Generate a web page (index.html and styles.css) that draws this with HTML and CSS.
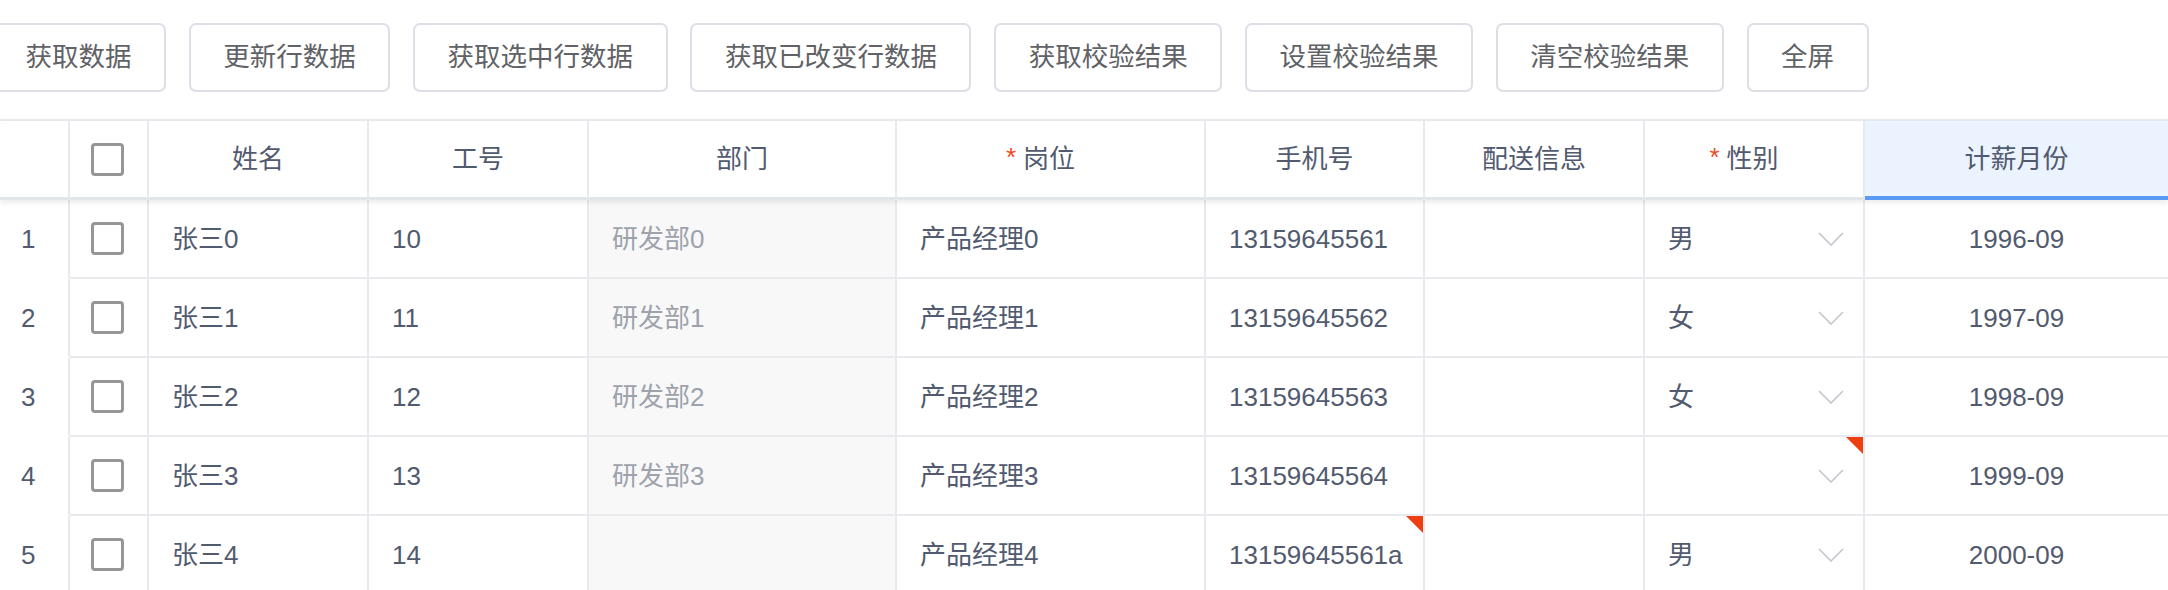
FILE: index.html
```html
<!DOCTYPE html>
<html lang="zh-CN">
<head>
<meta charset="utf-8">
<title>可编辑表格</title>
<link rel="stylesheet" href="styles.css">
</head>
<body>
<div class="page">
  <div class="toolbar">
    <button class="btn">获取数据</button>
    <button class="btn">更新行数据</button>
    <button class="btn">获取选中行数据</button>
    <button class="btn">获取已改变行数据</button>
    <button class="btn">获取校验结果</button>
    <button class="btn">设置校验结果</button>
    <button class="btn">清空校验结果</button>
    <button class="btn">全屏</button>
  </div>

  <div class="table">
    <div class="row head">
      <div class="cell seq"></div>
      <div class="cell chk"><span class="checkbox"></span></div>
      <div class="cell th">姓名</div>
      <div class="cell th">工号</div>
      <div class="cell th">部门</div>
      <div class="cell th req"><span class="star">*</span>岗位</div>
      <div class="cell th">手机号</div>
      <div class="cell th">配送信息</div>
      <div class="cell th req"><span class="star">*</span>性别</div>
      <div class="cell th active">计薪月份</div>
    </div>

    <div class="row">
      <div class="cell seq">1</div>
      <div class="cell chk"><span class="checkbox"></span></div>
      <div class="cell">张三0</div>
      <div class="cell">10</div>
      <div class="cell dept">研发部0</div>
      <div class="cell">产品经理0</div>
      <div class="cell">13159645561</div>
      <div class="cell"></div>
      <div class="cell select"><span>男</span><svg class="arrow" viewBox="0 0 26 14"><polyline points="1,1 13,13 25,1"/></svg></div>
      <div class="cell center">1996-09</div>
    </div>

    <div class="row">
      <div class="cell seq">2</div>
      <div class="cell chk"><span class="checkbox"></span></div>
      <div class="cell">张三1</div>
      <div class="cell">11</div>
      <div class="cell dept">研发部1</div>
      <div class="cell">产品经理1</div>
      <div class="cell">13159645562</div>
      <div class="cell"></div>
      <div class="cell select"><span>女</span><svg class="arrow" viewBox="0 0 26 14"><polyline points="1,1 13,13 25,1"/></svg></div>
      <div class="cell center">1997-09</div>
    </div>

    <div class="row">
      <div class="cell seq">3</div>
      <div class="cell chk"><span class="checkbox"></span></div>
      <div class="cell">张三2</div>
      <div class="cell">12</div>
      <div class="cell dept">研发部2</div>
      <div class="cell">产品经理2</div>
      <div class="cell">13159645563</div>
      <div class="cell"></div>
      <div class="cell select"><span>女</span><svg class="arrow" viewBox="0 0 26 14"><polyline points="1,1 13,13 25,1"/></svg></div>
      <div class="cell center">1998-09</div>
    </div>

    <div class="row">
      <div class="cell seq">4</div>
      <div class="cell chk"><span class="checkbox"></span></div>
      <div class="cell">张三3</div>
      <div class="cell">13</div>
      <div class="cell dept">研发部3</div>
      <div class="cell">产品经理3</div>
      <div class="cell">13159645564</div>
      <div class="cell"></div>
      <div class="cell select invalid"><span></span><svg class="arrow" viewBox="0 0 26 14"><polyline points="1,1 13,13 25,1"/></svg></div>
      <div class="cell center">1999-09</div>
    </div>

    <div class="row">
      <div class="cell seq">5</div>
      <div class="cell chk"><span class="checkbox"></span></div>
      <div class="cell">张三4</div>
      <div class="cell">14</div>
      <div class="cell dept"></div>
      <div class="cell">产品经理4</div>
      <div class="cell invalid">13159645561a</div>
      <div class="cell"></div>
      <div class="cell select"><span>男</span><svg class="arrow" viewBox="0 0 26 14"><polyline points="1,1 13,13 25,1"/></svg></div>
      <div class="cell center">2000-09</div>
    </div>
  </div>
</div>
</body>
</html>
```

FILE: styles.css
```css
* {
  box-sizing: border-box;
}

html, body {
  margin: 0;
  padding: 0;
  background: #ffffff;
  overflow: hidden;
}

body {
  font-family: "Liberation Sans", "Noto Sans CJK SC", sans-serif;
  font-size: 26px;
  color: #515a6e;
}

.page {
  width: 2168px;
}

.toolbar {
  display: flex;
  gap: 22.8px;
  padding-top: 23px;
  margin-left: -9px;
  margin-bottom: 27px;
}

.btn {
  height: 69px;
  padding: 0 32.5px;
  border: 2px solid #dcdfe6;
  border-radius: 7px;
  background: #ffffff;
  color: #606266;
  font-family: "Liberation Sans", "Noto Sans CJK SC", sans-serif;
  font-size: 26.5px;
  line-height: 1;
  white-space: nowrap;
}

.table {
  border-top: 2px solid #e6e9ee;
}

.row {
  display: grid;
  grid-template-columns: 70px 79px 220px 220px 308px 309px 219px 220px 220px 303px;
  height: 79px;
}

.row.head {
  height: 79px;
  position: relative;
  z-index: 1;
  box-shadow: 0 3px 5px rgba(0, 0, 0, 0.07);
}

.cell {
  position: relative;
  display: flex;
  align-items: center;
  padding: 0 23px;
  border-right: 2px solid #e8eaee;
  border-bottom: 2px solid #e8eaee;
  line-height: 1;
  white-space: nowrap;
  background: #ffffff;
}

.head .cell {
  border-bottom: 3px solid #e2e5ea;
}

.th {
  justify-content: center;
  padding: 0 10px;
  color: #515a6e;
}

.th.req {
  padding-right: 30px;
}

.star {
  color: #ee4a1e;
  font-size: 26px;
  margin-right: 7px;
  align-self: center;
  position: relative;
  top: -2px;
}

.th.active {
  background: #ebf3fe;
  border-bottom: 4px solid #5b9af3;
  border-right: none;
}

.cell.seq {
  padding-left: 21px;
  border-bottom-color: transparent;
}

.head .cell.seq {
  border-bottom: 3px solid #e2e5ea;
}

.cell.chk {
  justify-content: center;
  padding: 0;
}

.checkbox {
  display: block;
  width: 33px;
  height: 33px;
  border: 3px solid #969696;
  border-radius: 4px;
  background: #ffffff;
  margin-left: -2px;
}

.cell.dept {
  background: #f8f8f9;
  color: #9da2ab;
}

.cell.select {
  justify-content: space-between;
  padding-right: 19px;
}

.arrow {
  width: 26px;
  height: 14px;
  fill: none;
  stroke: #c3c6cc;
  stroke-width: 1.6;
}

.cell.center {
  justify-content: center;
  border-right: none;
}

.cell.invalid::after {
  content: "";
  position: absolute;
  top: 0;
  right: 0;
  width: 17px;
  height: 17px;
  background: #ee3f12;
  clip-path: polygon(0 0, 100% 0, 100% 100%);
}
```
